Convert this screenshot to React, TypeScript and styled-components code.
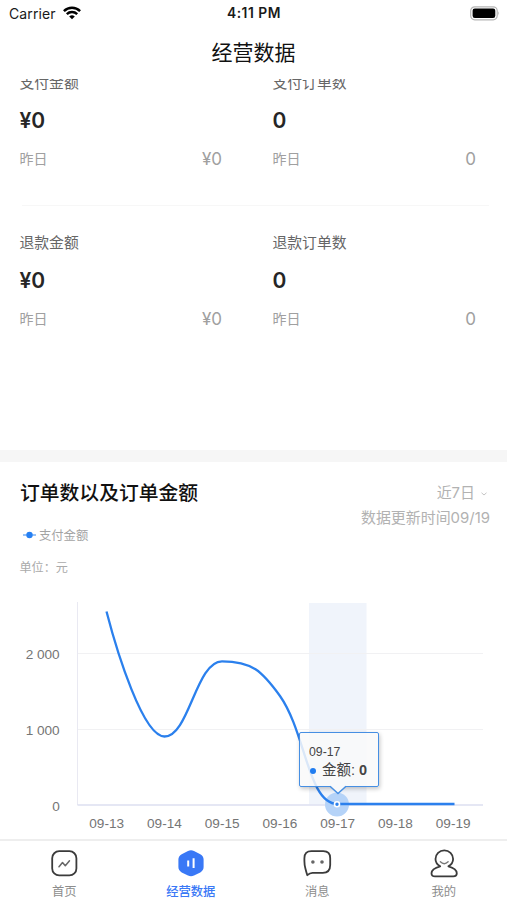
import React from "react";
import styled, { createGlobalStyle } from "styled-components";

const GlobalStyle = createGlobalStyle`
  * { box-sizing: border-box; }
  body {
    margin: 0;
    background: #fff;
    font-family: Inter, "Noto Sans CJK SC", sans-serif;
  }
`;

const Screen = styled.div`
  width: 507px;
  height: 900px;
  display: flex;
  flex-direction: column;
  overflow: hidden;
  background: #fff;
`;

const StatusBar = styled.div`
  height: 28px;
  flex: none;
  display: grid;
  grid-template-columns: 1fr auto 1fr;
  align-items: center;
  padding: 0 7px 2px 9px;
  color: #1a1a1a;
  font-size: 14px;
`;

const Carrier = styled.div`
  display: flex;
  align-items: center;
  gap: 7px;
  letter-spacing: 0.1px;
`;

const Clock = styled.div`
  padding-right: 1px;
  font-size: 13.8px;
  font-weight: 600;
  letter-spacing: 0.55px;
`;

const BatterySlot = styled.div`
  display: flex;
  justify-content: flex-end;
`;

const NavTitle = styled.h1`
  flex: none;
  height: 51px;
  margin: 0;
  line-height: 50px;
  text-align: center;
  font-size: 21px;
  font-weight: 400;
  color: #111;
`;

const Content = styled.main`
  flex: 1;
  min-height: 0;
  overflow: hidden;
`;

const Metrics = styled.section`
  margin-top: -8px;
  height: 379px;
`;

const MetricRow = styled.div`
  display: grid;
  grid-template-columns: 253px 254px;
`;

const Metric = styled.div`
  padding: 0 31px 0 19.5px;
`;

const MetricLabel = styled.div`
  height: 24px;
  line-height: 24px;
  font-size: 14.8px;
  color: #666;
`;

const MetricValue = styled.div`
  height: 51px;
  line-height: 52px;
  font-size: 21px;
  font-weight: 600;
  color: #262626;
`;

const MetricPrevious = styled.div`
  height: 26px;
  line-height: 26px;
  display: flex;
  justify-content: space-between;
  font-size: 14px;
  color: #a0a0a0;
`;

const PreviousValue = styled.span`
  font-size: 17px;
`;

const Divider = styled.div`
  height: 1px;
  margin: 33px 18px 25px 22px;
  background: #f7f7f7;
`;

const Band = styled.div`
  height: 12px;
  background: #f6f6f6;
`;

const Orders = styled.section`
  padding-top: 18px;
`;

const OrdersHead = styled.div`
  display: flex;
  justify-content: space-between;
  height: 48px;
  padding: 0 17px 0 20px;
`;

const OrdersTitle = styled.h2`
  margin: 0;
  font-size: 19.8px;
  line-height: 26px;
  font-weight: 500;
  color: #111;
`;

const Period = styled.div`
  margin-top: 1px;
  text-align: right;
  font-size: 14.95px;
  line-height: 25px;
  color: #b2b2b2;
`;

const PeriodPicker = styled.div`
  display: flex;
  align-items: center;
  justify-content: flex-end;
  gap: 6px;
  padding-right: 3px;
`;

const Legend = styled.div`
  display: flex;
  align-items: center;
  gap: 3px;
  height: 14px;
  margin-left: 23px;
  font-size: 12.3px;
  color: #a3a3a3;
`;

const Unit = styled.div`
  margin: 16px 0 0 19.5px;
  height: 33px;
  line-height: 20px;
  font-size: 12.1px;
  color: #aaa;
`;

const ChartBox = styled.div`
  position: relative;
  height: 249px;
`;

const Chart = styled.svg`
  display: block;
`;

const AxisText = styled.text`
  font: 13.6px "Liberation Sans", Arial, sans-serif;
  fill: #757575;
`;

const Tooltip = styled.div`
  position: absolute;
  left: 299px;
  top: 141px;
  width: 80px;
  height: 55px;
  padding: 11px 0 0 9px;
  border: 1.5px solid #468fe3;
  border-radius: 2px;
  background: rgba(249, 249, 249, 0.85);
  box-shadow: 1px 2px 4px rgba(0, 0, 0, 0.22);
  color: #444;
  font-family: "Liberation Sans", "Noto Sans CJK SC", sans-serif;
`;

const TooltipDate = styled.div`
  font-size: 12.3px;
  line-height: 17px;
`;

const TooltipValue = styled.div`
  display: flex;
  align-items: center;
  font-size: 14.5px;
  line-height: 19px;
  white-space: pre;
`;

const TooltipDot = styled.span`
  width: 6px;
  height: 6px;
  margin: 0 6px 0 1px;
  border-radius: 50%;
  background: #1f7cf0;
`;

const TooltipArrow = styled.svg`
  position: absolute;
  left: 29px;
  top: 51px;
`;

const TabBar = styled.nav`
  flex: none;
  height: 61px;
  display: grid;
  grid-template-columns: repeat(4, 1fr);
  padding: 7px 0 0 1px;
  border-top: 2px solid #eee;
`;

const Tab = styled.div<{ $active?: boolean }>`
  display: flex;
  flex-direction: column;
  align-items: center;
  gap: 2px;
  font-size: 12.3px;
  line-height: 20px;
  font-weight: ${(p) => (p.$active ? 500 : 400)};
  color: ${(p) => (p.$active ? "#3978f6" : "#8d8d8d")};
`;

const TabIcon = styled.svg`
  width: 32px;
  height: 32px;
  flex: none;
  fill: none;
  stroke-linecap: round;
  stroke-linejoin: round;
`;

type MetricData = { label: string; value: string; previous: string };

const rows: MetricData[][] = [
  [
    { label: "支付金额", value: "¥0", previous: "¥0" },
    { label: "支付订单数", value: "0", previous: "0" },
  ],
  [
    { label: "退款金额", value: "¥0", previous: "¥0" },
    { label: "退款订单数", value: "0", previous: "0" },
  ],
];

const days = ["09-13", "09-14", "09-15", "09-16", "09-17", "09-18", "09-19"];

const MetricPair = ({ items }: { items: MetricData[] }) => (
  <MetricRow>
    {items.map((m) => (
      <Metric key={m.label}>
        <MetricLabel>{m.label}</MetricLabel>
        <MetricValue>{m.value}</MetricValue>
        <MetricPrevious>
          <span>昨日</span>
          <PreviousValue>{m.previous}</PreviousValue>
        </MetricPrevious>
      </Metric>
    ))}
  </MetricRow>
);

const OrderChart = () => (
  <ChartBox>
    <Chart width="507" height="249" viewBox="0 591 507 249">
      <rect x="309" y="603" width="57.5" height="201.5" fill="#f0f4fb" />
      <path d="M78 653.5H483M78 729.5H483" stroke="#f1f1f3" />
      <path d="M77.5 602V805" stroke="#e9e9f2" />
      <path d="M77.5 805H483" stroke="#dcdff0" strokeWidth="1.6" />
      <AxisText x="59.7" y="659" textAnchor="end">2 000</AxisText>
      <AxisText x="59.7" y="735" textAnchor="end">1 000</AxisText>
      <AxisText x="59.7" y="810.5" textAnchor="end">0</AxisText>
      {days.map((d, i) => (
        <AxisText key={d} x={106.7 + i * 57.75} y="828" textAnchor="middle">
          {d}
        </AxisText>
      ))}
      <circle cx="337" cy="804.5" r="12" fill="#b5d3f8" />
      <path
        d="M106.5 611.5C117 652 143 736.5 164.5 736.5C189 736.5 196 661.3 222 661.3C252 661.3 262 671 280 696C306 733 308 804 337.5 804H454.5"
        fill="none"
        stroke="#2b80ed"
        strokeWidth="2.3"
      />
      <circle cx="337" cy="804.3" r="2.5" fill="#2b80ed" stroke="#fff" strokeWidth="1.6" />
    </Chart>
    <Tooltip>
      <TooltipDate>09-17</TooltipDate>
      <TooltipValue>
        <TooltipDot />
        金额: <b>0</b>
      </TooltipValue>
      <TooltipArrow width="18" height="12" viewBox="0 0 18 12">
        <path d="M1 0V2L9 9.5L17 2V0Z" fill="#f8f9fa" />
        <path d="M1 2.2L9 9.5L17 2.2" fill="none" stroke="#468fe3" strokeWidth="1.5" />
      </TooltipArrow>
    </Tooltip>
  </ChartBox>
);

export default function App() {
  return (
    <>
      <GlobalStyle />
      <Screen>
        <StatusBar>
          <Carrier>
            Carrier
            <svg width="18" height="14" viewBox="0 0 18 14" fill="none" stroke="#000" strokeWidth="2.5">
              <path d="M.9 5.1C5.5.7 12.5.7 17.1 5.1" />
              <path d="M3.8 8.2C6.8 5.4 11.2 5.4 14.2 8.2" />
              <path d="M6.2 10.4Q9 8.2 11.8 10.4L9 13.3Z" fill="#000" stroke="none" />
            </svg>
          </Carrier>
          <Clock>4:11 PM</Clock>
          <BatterySlot>
            <svg width="30" height="15" viewBox="0 0 30 15">
              <rect x=".7" y=".8" width="26.5" height="13" rx="4" fill="#fff" stroke="#b5b5b5" strokeWidth="1.2" />
              <rect x="2.6" y="2.6" width="22.7" height="9.4" rx="2.2" fill="#000" />
              <path d="M28.3 5.2Q30 7.3 28.3 9.4Z" fill="#aaa" />
            </svg>
          </BatterySlot>
        </StatusBar>
        <NavTitle>经营数据</NavTitle>

        <Content>
          <Metrics>
            <MetricPair items={rows[0]} />
            <Divider />
            <MetricPair items={rows[1]} />
          </Metrics>
          <Band />
          <Orders>
            <OrdersHead>
              <OrdersTitle>订单数以及订单金额</OrdersTitle>
              <Period>
                <PeriodPicker>
                  近7日
                  <svg width="6" height="4" viewBox="0 0 6 4" fill="none" stroke="#c4c4c4">
                    <path d="M.5.8L3 3L5.5.8" />
                  </svg>
                </PeriodPicker>
                数据更新时间09/19
              </Period>
            </OrdersHead>
            <Legend>
              <svg width="13" height="8" viewBox="0 0 13 8">
                <path d="M0 4H13" stroke="#75aef5" strokeWidth="1.5" />
                <circle cx="6.5" cy="4" r="3.2" fill="#2680f3" />
              </svg>
              支付金额
            </Legend>
            <Unit>单位：元</Unit>
            <OrderChart />
          </Orders>
        </Content>

        <TabBar>
          <Tab>
            <TabIcon viewBox="0 0 32 32" stroke="#3b3b3b" strokeWidth="1.8">
              <rect x="4.2" y="3.2" width="24.2" height="24.2" rx="7" />
              <path d="M11 18.8L14.5 14.5L17.3 17.8L21.5 12.8" stroke="#666" strokeWidth="1.5" />
            </TabIcon>
            首页
          </Tab>
          <Tab $active>
            <TabIcon viewBox="0 0 32 32">
              <path
                d="M13 3.1Q16 1.6 19 3.1L25.3 6.2Q28.6 8 28.6 11.5V19Q28.6 22.5 25.3 24.4L19 27.6Q16 29 13 27.6L6.7 24.4Q3.4 22.5 3.4 19V11.5Q3.4 8 6.7 6.2Z"
                fill="#3978f6"
              />
              <path d="M13.2 12.4V18.6M18.6 10.2V20" stroke="#fff" strokeWidth="2" strokeLinecap="butt" />
            </TabIcon>
            经营数据
          </Tab>
          <Tab>
            <TabIcon viewBox="0 0 32 32" stroke="#3b3b3b" strokeWidth="1.8">
              <path d="M6.3 27.2Q5.2 23.8 4.4 20.5Q3.4 17 3.4 13V10.2Q3.4 3.2 10.4 3.2H22.3Q29.2 3.2 29.2 10.2V17Q29.2 24.8 21.8 24.8H11.5Q8.8 24.8 6.3 27.2Z" />
              <circle cx="11.9" cy="14" r="1.8" fill="#666" stroke="none" />
              <circle cx="21" cy="14" r="1.8" fill="#666" stroke="none" />
            </TabIcon>
            消息
          </Tab>
          <Tab>
            <TabIcon viewBox="0 0 32 32" stroke="#3b3b3b" strokeWidth="1.8">
              <path d="M12.2 18.3Q7.5 15.6 7.5 10.9A8.8 8.6 0 0 1 25.1 10.9Q25.1 15.6 20.4 18.3Q28.8 20.5 28.8 25.3Q28.8 28.4 25.3 28.4H7Q3.5 28.4 3.5 25.3Q3.5 20.5 12.2 18.3Z" />
              <path d="M12.4 13.8Q16.2 17.6 20.1 13.8" stroke="#777" strokeWidth="1.4" />
            </TabIcon>
            我的
          </Tab>
        </TabBar>
      </Screen>
    </>
  );
}
